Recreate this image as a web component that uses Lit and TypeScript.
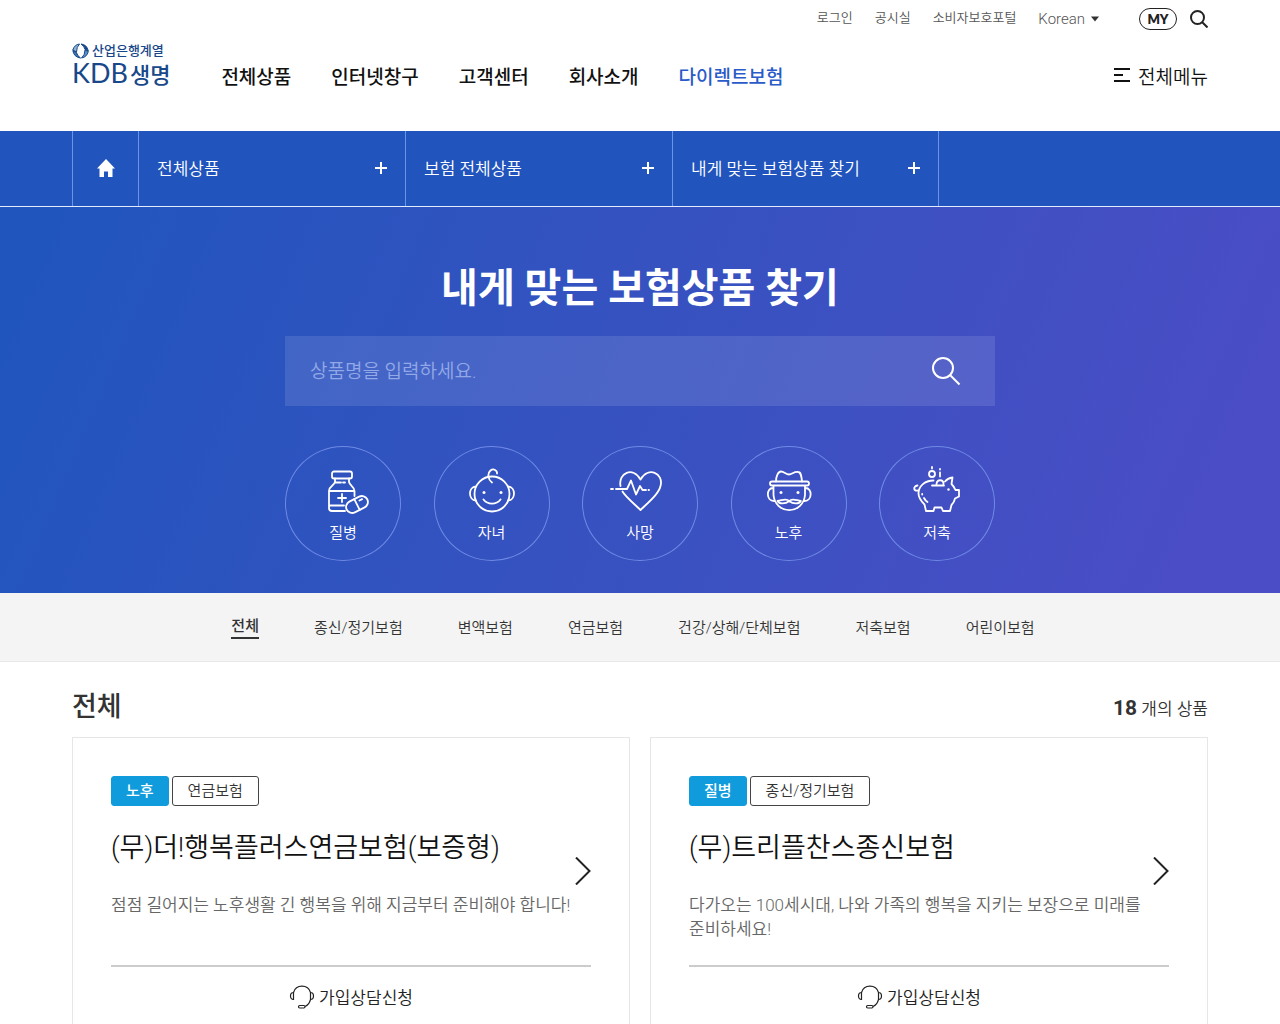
import { LitElement, html, css, svg } from "lit";
import { customElement, property } from "lit/decorators.js";
import { classMap } from "lit/directives/class-map.js";

const NAV = ["전체상품", "인터넷창구", "고객센터", "회사소개", "다이렉트보험"];
const CRUMBS = ["전체상품", "보험 전체상품", "내게 맞는 보험상품 찾기"];
const TABS = ["전체", "종신/정기보험", "변액보험", "연금보험", "건강/상해/단체보험", "저축보험", "어린이보험"];

const NEEDS = [
  {
    label: "질병",
    art: svg`
      <rect x="19" y="7.500" width="20" height="7" rx="2"/>
      <path d="M22 14.500v3.500c-1 4-6 4-6 9v17q0 3 3 3h13M36 14.500v3.500c1 4 5 4 5.500 9v5M16 27h25M16 41.500h15M23 18.500h5M30 18.500h2M29 30v8M25 34h8"/>
      <g transform="rotate(-27 44 40.500)"><rect x="32.500" y="34.500" width="23" height="12" rx="6"/><path d="M44 34.500v12M48 38h3"/></g>`,
  },
  {
    label: "자녀",
    art: svg`
      <circle cx="30" cy="30" r="17.500"/>
      <path d="M14 22.500c-8 0-8 14 0 14M46 22.500c8 0 8 14 0 14M21.500 35.500c4 5.500 13 5.500 17 0M30 18.500c-4-3-5-9-1.500-12 3-2.500 7 0 6.500 3"/>
      <circle class="dot" cx="22" cy="28.500" r="1.500"/><circle class="dot" cx="39" cy="28.500" r="1.500"/>`,
  },
  {
    label: "사망",
    art: svg`
      <path d="M10.500 22C8 9 23 2 30.500 15.500 38 2 54 9 50.500 22 49 29 41 36 30.500 46 21 37 15 32 12.500 27.500"/>
      <path d="M1 25h2M6 25h11l4-8.500 5 14 4-8.500 2.500 4h3.500M38.500 26h.500"/>`,
  },
  {
    label: "노후",
    art: svg`
      <path d="M17 17.500c0-5 2-10 5-10s5 3 8 3 5-3 9-2.500c3 0 3.500 4 4 9.500"/>
      <rect x="11" y="17.500" width="39" height="4" rx="2"/>
      <path d="M14.500 22v9a15.800 16.500 0 0 0 31.500 0v-9M14 24c-7 0-7 13 1 13M46.500 24c7 0 7 13-1 13"/>
      <path d="M18.500 37c2 3.500 8 3 11.700 0 3.700 3 9.700 3.500 11.700 0-4-.300-8.700-3.500-11.700 0-3-3.500-7.700-.300-11.700 0z"/>
      <circle class="dot" cx="22" cy="28.500" r="1.500"/><circle class="dot" cx="39" cy="28.500" r="1.500"/>`,
  },
  {
    label: "저축",
    art: svg`
      <path d="M26.500 16.500c-9 0-15 6-15 13 0 5 3 8 6 11l1.500 6.500h7.500l1-3.500h7l1.500 3.500H43l1.500-6c2-2 3-4 3.500-6.500l4-2v-6.500h-3.500c-1-2.500-2-4-4-6l1-6.500c-3 .500-5.500 1.500-7.500 4M25 21.500h12M29.500 20c.500-5 7-5 7 0"/>
      <path d="M11.500 26.500c-5 1-6-4-1-5M17 34c1 2 2 3 3.500 4M15.200 30v.500M25 3v1.500M33 5v.500M33 8.500v4"/>
      <circle cx="25" cy="10" r="3"/><circle class="dot" cx="41.500" cy="25.500" r="1.200"/>`,
  },
];

interface Product {
  need: string;
  kind: string;
  name: string;
  text: string;
}

const PRODUCTS: Product[] = [
  { need: "노후", kind: "연금보험", name: "(무)더!행복플러스연금보험(보증형)", text: "점점 길어지는 노후생활 긴 행복을 위해 지금부터 준비해야 합니다!" },
  { need: "질병", kind: "종신/정기보험", name: "(무)트리플찬스종신보험", text: "다가오는 100세시대, 나와 가족의 행복을 지키는 보장으로 미래를 준비하세요!" },
];

const base = css`
  * { box-sizing: border-box; }
  a { color: inherit; text-decoration: none; }
  button { font: inherit; color: inherit; background: none; border: 0; padding: 0; cursor: pointer; }
  svg { display: block; fill: none; stroke: currentColor; flex: none; }
  h1, h2, h3, p, ul { margin: 0; padding: 0; list-style: none; font-weight: inherit; }
`;

@customElement("kdb-header")
class KdbHeader extends LitElement {
  static styles = [base, css`
    :host { display: block; background: #fff; }
    .inner { max-width: 1280px; margin: 0 auto; padding: 0 72px 19px; }
    .util { display: flex; justify-content: flex-end; align-items: center; height: 38px; gap: 22px; font-size: 13px; line-height: 20px; color: #555; }
    .util > a { margin-bottom: 2px; }
    .lang { display: flex; align-items: center; gap: 6px; font-size: 15px; }
    .caret { fill: #333; stroke: none; }
    .tools { display: flex; align-items: center; gap: 13px; margin-left: 18px; color: #222; }
    .my { display: block; width: 38px; height: 22px; border: 1px solid #222; border-radius: 11px; font: 800 13px/20px Lato, sans-serif; text-align: center; }
    .main { display: flex; align-items: center; height: 74px; }
    .logo { display: flex; flex-direction: column; color: #18488a; margin-bottom: 18px; margin-right: 51px; }
    .group { display: flex; align-items: center; gap: 3px; font-size: 13px; line-height: 16px; font-weight: 500; }
    .name { display: flex; align-items: baseline; gap: 2px; line-height: 28px; font-size: 22px; font-weight: 500; }
    .latin { font-family: Lato, sans-serif; font-size: 27px; font-weight: 400; }
    .nav { display: flex; gap: 40px; font-size: 19px; font-weight: 500; color: #111; }
    .direct { color: #2a5bc8; }
    .all { display: flex; align-items: center; gap: 8px; margin-left: auto; font-size: 19px; color: #111; }
  `];

  render() {
    return html`
      <header class="inner">
        <div class="util">
          <a href="#">로그인</a>
          <a href="#">공시실</a>
          <a href="#">소비자보호포털</a>
          <button class="lang" type="button">Korean
            <svg class="caret" width="8" height="6" viewBox="0 0 8 6"><path d="M0 .500h8l-4 5z"/></svg>
          </button>
          <div class="tools">
            <a class="my" href="#">MY</a>
            <button type="button" aria-label="검색">
              <svg width="18" height="18" viewBox="0 0 18 18" stroke-width="2"><circle cx="7.500" cy="7.500" r="6.500"/><path d="M12 12l5.500 5.500"/></svg>
            </button>
          </div>
        </div>
        <div class="main">
          <a class="logo" href="#">
            <span class="group">
              <svg width="17" height="16" viewBox="0 0 17 16" stroke="none">
                <path fill="#8fb4d8" d="M7.500 1Q2.500 1.500.800 7l3.700 2q0-5 3-8z"/>
                <path fill="#3f74ad" d="M.800 7.500q1 6.500 7.700 7.500-3.500-2.500-4-5.500z"/>
                <path fill="#18488a" d="M9 1q6 .500 7.300 7l-3.300-1.500Q12.500 3.500 9 1z"/>
                <path fill="#5d90c4" d="M16.300 8.500q-1.300 5.500-6.800 6.500 3.500-3 3.500-8z"/>
              </svg>산업은행계열</span>
            <span class="name"><span class="latin">KDB</span>생명</span>
          </a>
          <nav class="nav">
            ${NAV.map((n, i) => html`<a href="#" class=${classMap({ direct: i === 4 })}>${n}</a>`)}
          </nav>
          <button class="all" type="button">
            <svg width="17" height="14" viewBox="0 0 17 14" stroke-width="2"><path d="M1 1h16M1 7h9M1 13h16"/></svg>전체메뉴
          </button>
        </div>
      </header>`;
  }
}

@customElement("kdb-crumbs")
class KdbCrumbs extends LitElement {
  static styles = [base, css`
    :host { display: block; background: #2154bc; border-bottom: 1px solid #e3ecff; color: #fff; }
    .row { display: grid; grid-template-columns: 66px repeat(3, minmax(0, 267px)); max-width: 1280px; margin: 0 auto; padding: 0 72px; }
    .cell { display: flex; align-items: center; justify-content: space-between; height: 75px; padding: 0 18px 2px; border-left: 1px solid #6b93e6; font-size: 17px; }
    .home { justify-content: center; padding: 0 0 2px; }
    .house { fill: currentColor; stroke: none; }
    .last { border-right: 1px solid #6b93e6; }
  `];

  render() {
    return html`
      <nav class="row">
        <a class="cell home" href="#" aria-label="홈">
          <svg class="house" width="18" height="18" viewBox="0 0 18 18"><path d="M9 0l9 9.500h-2.500V18H11v-5.500H7V18H2.500V9.500H0z"/></svg>
        </a>
        ${CRUMBS.map((c, i) => html`
          <button type="button" class=${classMap({ cell: true, last: i === 2 })}>${c}
            <svg width="12" height="12" viewBox="0 0 12 12" stroke-width="2"><path d="M6 0v12M0 6h12"/></svg>
          </button>`)}
      </nav>`;
  }
}

@customElement("kdb-finder")
class KdbFinder extends LitElement {
  static styles = [base, css`
    :host { display: block; background: linear-gradient(113deg, #2155be 4%, #3752c0 50%, #4b4dc6 94%); color: #fff; padding: 52px 24px 32px; }
    .inner { max-width: 710px; margin: 0 auto; }
    .title { font-size: 40px; line-height: 60px; font-weight: 700; text-align: center; }
    .search { display: flex; align-items: center; height: 70px; margin: 17px 0 40px; padding: 0 34px 0 25px; background: rgba(255, 255, 255, .11); }
    .field { flex: 1; min-width: 0; height: 70px; border: 0; padding: 0; background: none; color: #fff; font: inherit; font-size: 19px; outline: 0; }
    .field::placeholder { color: #93a8e6; opacity: 1; }
    .needs { display: flex; justify-content: space-between; }
    .need { display: flex; flex-direction: column; align-items: center; width: 116px; height: 115px; padding-top: 17px; border: 1px solid #6f8ae4; border-radius: 50%; font-size: 15px; line-height: 22px; }
    .art { stroke-width: 1.8; stroke-linecap: round; stroke-linejoin: round; margin-bottom: 6px; }
    .dot { fill: currentColor; stroke: none; }
  `];

  render() {
    return html`
      <section class="inner">
        <h1 class="title">내게 맞는 보험상품 찾기</h1>
        <form class="search" @submit=${(e: Event) => e.preventDefault()}>
          <input class="field" type="text" aria-label="상품명" placeholder="상품명을 입력하세요." />
          <button type="submit" aria-label="검색">
            <svg width="30" height="30" viewBox="0 0 30 30" stroke-width="2"><circle cx="12" cy="12" r="10"/><path d="M19 19l9.500 9.500"/></svg>
          </button>
        </form>
        <div class="needs">
          ${NEEDS.map((n) => html`
            <button class="need" type="button">
              <svg class="art" width="60" height="52" viewBox="0 0 60 52">${n.art}</svg>${n.label}
            </button>`)}
        </div>
      </section>`;
  }
}

@customElement("kdb-tabs")
class KdbTabs extends LitElement {
  static styles = [base, css`
    :host { display: block; background: #f4f4f4; border-bottom: 1px solid #e8e8e8; }
    .row { display: flex; justify-content: center; align-items: center; gap: 55px; height: 68px; padding-right: 14px; font-size: 15px; line-height: 22px; color: #333; }
    .tab { padding-top: 2px; }
    .on { padding: 0; border-bottom: 2px solid #333; font-weight: 500; }
  `];

  render() {
    return html`<nav class="row">${TABS.map((t, i) => html`<a href="#" class=${classMap({ tab: true, on: i === 0 })}>${t}</a>`)}</nav>`;
  }
}

@customElement("kdb-card")
class KdbCard extends LitElement {
  @property({ attribute: false }) product!: Product;

  static styles = [base, css`
    :host { display: block; border: 1px solid #e6e6e6; padding: 38px 38px 40px; background: #fff; }
    .body { display: flex; align-items: center; border-bottom: 2px solid #ccc; }
    .info { flex: 1; min-width: 0; padding-bottom: 24px; }
    .tags { display: flex; gap: 3px; font-size: 15px; line-height: 28px; }
    .need { padding: 0 14px; border: 1px solid #109cdc; border-radius: 3px; background: #109cdc; color: #fff; font-weight: 500; }
    .kind { padding: 0 15px; border: 1px solid #444; border-radius: 3px; color: #333; }
    .name { margin: 22px 0 25px; font-size: 27px; line-height: 40px; color: #111; }
    .text { min-height: 48px; font-size: 17px; line-height: 24px; color: #666; word-break: keep-all; }
    .consult { display: flex; align-items: center; justify-content: center; gap: 4px; width: 100%; height: 59px; font-size: 17px; color: #222; }
    :host(:nth-child(even)) .consult { padding-right: 20px; }
  `];

  render() {
    const p = this.product;
    return html`
      <a class="body" href="#">
        <div class="info">
          <div class="tags"><span class="need">${p.need}</span><span class="kind">${p.kind}</span></div>
          <h3 class="name">${p.name}</h3>
          <p class="text">${p.text}</p>
        </div>
        <svg width="16" height="28" viewBox="0 0 16 28" stroke="#333" stroke-width="2"><path d="M1 .500L14.500 14 1 27.500"/></svg>
      </a>
      <button class="consult" type="button">
        <svg width="26" height="24" viewBox="0 0 26 24" stroke-width="1.200">
          <path d="M4.500 7.500C7-1 19-1 21.500 7.500M4.500 7.500v7C.500 14.500.500 7.500 4.500 7.500zM21.500 7.500v7c4 0 4-7 0-7zM21.500 14.500c-1 4-3 6-5.500 7"/>
          <rect x="9.500" y="20.500" width="6.500" height="2.500" rx="1.200"/>
        </svg>가입상담신청
      </button>`;
  }
}

@customElement("app-root")
class AppRoot extends LitElement {
  static styles = [base, css`
    :host { display: block; min-height: 100vh; background: #fff; color: #222; font-family: Roboto, "Noto Sans CJK KR", sans-serif; font-weight: 350; }
    .list { max-width: 1280px; margin: 0 auto; padding: 25px 72px 40px; }
    .head { display: flex; align-items: center; justify-content: space-between; height: 40px; margin-bottom: 10px; }
    .title { font-size: 27px; line-height: 40px; font-weight: 500; color: #333; }
    .count { font-size: 17px; color: #333; }
    .number { font-size: 21px; font-weight: 700; }
    .cards { display: grid; grid-template-columns: 1fr 1fr; gap: 20px; }
  `];

  render() {
    return html`
      <kdb-header></kdb-header>
      <kdb-crumbs></kdb-crumbs>
      <kdb-finder></kdb-finder>
      <kdb-tabs></kdb-tabs>
      <main class="list">
        <div class="head">
          <h2 class="title">전체</h2>
          <p class="count"><strong class="number">18</strong> 개의 상품</p>
        </div>
        <div class="cards">
          ${PRODUCTS.map((p) => html`<kdb-card .product=${p}></kdb-card>`)}
        </div>
      </main>`;
  }
}
